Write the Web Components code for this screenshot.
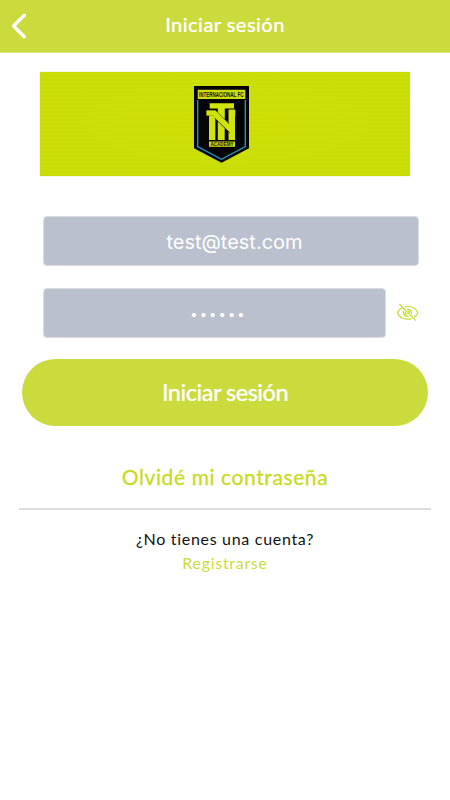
<!DOCTYPE html>
<html lang="es">
<head>
<meta charset="utf-8">
<meta name="viewport" content="width=device-width, initial-scale=1">
<title>Iniciar sesión</title>
<style>
  html, body { margin: 0; height: 100%; background: #fff; }
  body { overflow: hidden; }
</style>
</head>
<body>
<login-page></login-page>

<script>
/** Barra superior con flecha de volver y título. */
class AppHeader extends HTMLElement {
  constructor() {
    super();
    this.attachShadow({ mode: "open" }).innerHTML = `
      <style>
        :host {
          display: grid;
          grid-template-columns: 40px 1fr 40px;
          align-items: center;
          height: 53px;
          background: var(--lime);
          border-bottom: 1px solid #dce67f;
          box-sizing: border-box;
          color: #fff;
        }
        svg { display: block; width: 40px; height: 52px; }
        h1 {
          margin: 0;
          padding-bottom: 4px;
          text-align: center;
          font-size: 20px;
          line-height: 24px;
          font-weight: 500;
          letter-spacing: 0.45px;
          -webkit-text-stroke: 0.2px currentColor;
        }
      </style>
      <svg viewBox="0 0 40 52" aria-hidden="true">
        <path d="M24.300 15.300 13.500 26l10.800 10.800" fill="none" stroke="#fff" stroke-width="3.400" stroke-linecap="round" stroke-linejoin="round"/>
      </svg>
      <h1><slot></slot></h1>
    `;
  }
}
customElements.define("app-header", AppHeader);

/** Banner del club con el escudo centrado. */
class ClubBanner extends HTMLElement {
  constructor() {
    super();
    this.attachShadow({ mode: "open" }).innerHTML = `
      <style>
        :host {
          display: flex;
          justify-content: center;
          height: 104px;
          background:
            repeating-linear-gradient(0deg, rgba(170, 185, 0, 0.07) 0 1px, transparent 1px 4px),
            radial-gradient(ellipse at center, #cee005 0, #cade08 100%);
          box-shadow: 0 0 1px #c5d566;
        }
        svg { display: block; width: 58px; height: 80px; margin: 13px 8px 0 0; overflow: visible; }
        text { font-family: "Liberation Sans", sans-serif; font-weight: bold; }
      </style>
      <svg viewBox="0 0 58 80">
        <path d="M2 1h55v62.300L29.500 77.700 2 63.300z" fill="#050505"/>
        <path d="M5.700 15v46.500l23.800 12.700 23.800-12.700V15" fill="none" stroke="#249bc4" stroke-width="1.300"/>
        <path d="M5.700 4.800h47.600v9.200H5.700z" fill="#cddf0b"/>
        <text x="7" y="12" font-size="7" textLength="44.500" lengthAdjust="spacingAndGlyphs" fill="#111">INTERNACIONAL FC</text>
        <g fill="#d0e30b">
          <path d="M17 30h6.300v25H17zM36.500 24.500h6.800v6H43V55h-6.500z"/>
          <path d="M17.700 18.200H42v5.300h-9.300V55h-6.900V23.500h-8.100z"/>
          <path d="M14 25h9.500L37.500 39v8.500L22 32.500V31h-8z" stroke="#050505" stroke-width=".7"/>
          <path d="M26.200 23h6.100v10.500l-6.100-6z"/>
          <path d="M17.300 30.500h5.500V35h-5.500zM36.900 38.500h5.700V47h-5.700z"/>
        </g>
        <path d="M17 56.500h26v5.300H17z" fill="#cddf0b"/>
        <text x="18.500" y="61.100" font-size="5.500" textLength="23" lengthAdjust="spacingAndGlyphs" fill="#111">ACADEMY</text>
      </svg>
    `;
  }
}
customElements.define("club-banner", ClubBanner);

/** Campo de texto; el contenido llega por el slot. */
class LoginField extends HTMLElement {
  constructor() {
    super();
    this.attachShadow({ mode: "open" }).innerHTML = `
      <style>
        :host {
          display: flex;
          align-items: center;
          justify-content: center;
          height: 50px;
          padding: 1px 0 0 7px;
          box-sizing: border-box;
          border: 1px solid #dcdcde;
          border-radius: 4px;
          background: #bac0ce;
          color: #fff;
          font-family: Inter, sans-serif;
          font-size: 20px;
          line-height: 24px;
        }
        :host([secret]) {
          font-size: 13px;
          letter-spacing: 2.100px;
          padding-left: 8px;
        }
      </style>
      <slot></slot>
    `;
  }
}
customElements.define("login-field", LoginField);

class EyeToggle extends HTMLElement {
  constructor() {
    super();
    this.attachShadow({ mode: "open" }).innerHTML = `
      <style>
        :host { display: block; width: 23px; height: 20px; }
        svg { display: block; }
      </style>
      <svg width="23" height="20" viewBox="0 0 23 20" fill="none" stroke="#c9da2c" stroke-width="1.200">
        <path d="M7.200 4.300C4.400 5.400 2.300 7.600 1.500 9.800c1.500 3.900 5.400 6.400 10.100 6.400 1.300 0 2.500-.2 3.600-.6"/>
        <path d="M9.300 3.700c.8-.1 1.500-.2 2.300-.2 4.700 0 8.600 2.500 10.200 6.300-.7 1.800-2 3.400-3.800 4.500"/>
        <path d="M7.900 7.600c-1.500 2.600.2 5.700 3.400 5.700.6 0 1.100-.1 1.600-.3M11 6.100c3.300-.3 5.400 2.700 4.400 5.200"/>
        <path d="M9.400 9c-.5 1.400.4 2.500 1.800 2.500M11.800 7.900c1.200.1 1.900 1 1.800 2.100" stroke-width="1.400"/>
        <path d="M3.300 1 19.800 17.700"/>
      </svg>
    `;
  }
}
customElements.define("eye-toggle", EyeToggle);

class PrimaryButton extends HTMLElement {
  constructor() {
    super();
    this.attachShadow({ mode: "open" }).innerHTML = `
      <style>
        :host { display: block; }
        button {
          display: block;
          width: 100%;
          height: 67px;
          padding: 0 0 2px;
          border: 0;
          border-radius: 34px;
          background: var(--lime);
          color: #fff;
          font: 500 23.500px/28px Lato, sans-serif;
          letter-spacing: -0.5px;
          -webkit-text-stroke: 0.2px currentColor;
        }
      </style>
      <button type="button"><slot></slot></button>
    `;
  }
}
customElements.define("primary-button", PrimaryButton);

/** Pantalla completa de acceso. */
class LoginPage extends HTMLElement {
  constructor() {
    super();
    this.attachShadow({ mode: "open" }).innerHTML = `
      <style>
        :host {
          --lime: #cbda3c;
          display: block;
          height: 100vh;
          background: #fff;
          font-family: Lato, sans-serif;
        }
        club-banner { margin: 19px 40px 0; }
        .form {
          display: grid;
          gap: 22px;
          margin: 40px 31px 0 43px;
        }
        .row {
          display: grid;
          grid-template-columns: 343px 23px;
          align-items: center;
          gap: 10px;
        }
        primary-button { margin: 21px 22px 0; }
        .forgot {
          padding: 38px 0 18px;
          margin: 0 19px;
          border-bottom: 2px solid #dedede;
          text-align: center;
          color: #c8da24;
          font-size: 21px;
          line-height: 26px;
          letter-spacing: 0.6px;
          -webkit-text-stroke: 0.3px currentColor;
        }
        .signup {
          margin-top: 17px;
          text-align: center;
          font-size: 16px;
          line-height: 24px;
          letter-spacing: 0.7px;
          color: #111;
        }
        .signup p { margin: 0; }
        .signup .link { color: #cbdb3c; }
      </style>
      <app-header>Iniciar sesión</app-header>
      <club-banner></club-banner>
      <div class="form">
        <login-field>test@test.com</login-field>
        <div class="row">
          <login-field secret>••••••</login-field>
          <eye-toggle></eye-toggle>
        </div>
      </div>
      <primary-button>Iniciar sesión</primary-button>
      <div class="forgot">Olvidé mi contraseña</div>
      <div class="signup">
        <p>¿No tienes una cuenta?</p>
        <p class="link">Registrarse</p>
      </div>
    `;
  }
}
customElements.define("login-page", LoginPage);
</script>
</body>
</html>
